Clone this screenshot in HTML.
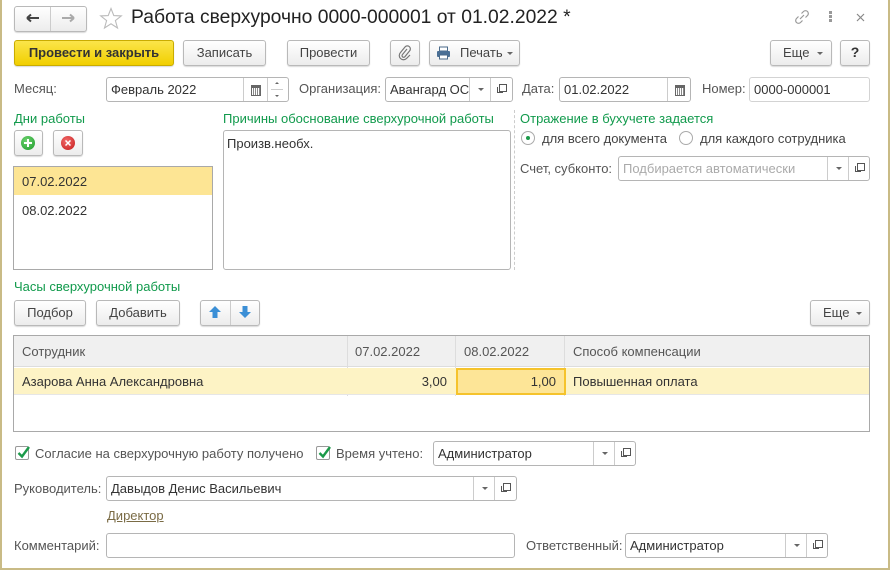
<!DOCTYPE html>
<html><head><meta charset="utf-8"><style>
*{box-sizing:border-box;margin:0;padding:0}
body{width:890px;height:570px;background:#fff;font-family:"Liberation Sans",Arial,sans-serif;font-size:13px;color:#333;position:relative;overflow:hidden}
.frame{position:absolute;left:0;top:0;width:890px;height:570px;border-left:2px solid #c9bb86;border-right:2px solid #c9bb86;border-bottom:2px solid #c9bb86}
.a{position:absolute}
.btn{position:absolute;height:25px;border:1px solid #b9b9b9;border-radius:3px;background:linear-gradient(#fff,#ececec);box-shadow:0 1px 1px rgba(0,0,0,.15);text-align:center;line-height:23px;color:#444}
.fld{position:absolute;height:25px;border:1px solid #b5b5b5;border-radius:3px;background:#fff;line-height:23px;padding-left:4px;color:#333;white-space:nowrap;overflow:hidden}
.lbl{position:absolute;color:#555;white-space:nowrap}
.grn{position:absolute;color:#119a4c;white-space:nowrap}
.sep{position:absolute;top:0;width:1px;height:23px;background:#ccc}
.dd{position:absolute;top:0;width:21px;height:23px;border-left:1px solid #ccc}
.dd:after{content:"";position:absolute;left:8px;top:10px;border-left:3px solid transparent;border-right:3px solid transparent;border-top:3px solid #666}
.op{position:absolute;top:0;width:21px;height:23px;border-left:1px solid #ccc}
.op:before{content:"";position:absolute;left:8px;top:6px;width:6px;height:6px;border:1px solid #555}
.op:after{content:"";position:absolute;left:6px;top:9px;width:5px;height:5px;border-left:1px solid #555;border-bottom:1px solid #555}
.cal{position:absolute;top:0;width:23px;height:23px;border-left:1px solid #ccc}
.cal:after{content:"";position:absolute;left:7px;top:7px;width:8px;height:7px;border:1px solid #666;border-top:3px solid #666;background:repeating-linear-gradient(90deg,#fff 0 1px,#888 1px 2px)}
.cb{position:absolute;width:14px;height:14px;border:1px solid #999;border-radius:2px;background:#fff}
.cb svg{position:absolute;left:0;top:-2px}
</style></head><body>
<div class="frame"></div>

<div class="btn" style="left:14px;top:6px;width:73px;height:26px"></div>
<div class="a" style="left:50px;top:7px;width:1px;height:24px;background:#ccc"></div>
<svg class="a" style="left:26px;top:13px" width="14" height="10"><path d="M1 5H13M1 5L5 1.5M1 5L5 8.5" stroke="#444" stroke-width="2" fill="none"/></svg>
<svg class="a" style="left:61px;top:13px" width="14" height="10"><path d="M13 5H1M13 5L9 1.5M13 5L9 8.5" stroke="#aaa" stroke-width="2" fill="none"/></svg>
<svg class="a" style="left:99px;top:7px" width="24" height="23"><path d="M12 1.5L14.8 8.6 22.3 8.9 16.4 13.6 18.5 21 12 16.8 5.5 21 7.6 13.6 1.7 8.9 9.2 8.6Z" fill="none" stroke="#bbb" stroke-width="1.1"/></svg>
<div class="a" style="left:131px;top:7px;font-size:19.3px;color:#222;white-space:nowrap">Работа сверхурочно 0000-000001 от 01.02.2022 *</div>
<svg class="a" style="left:794px;top:9px" width="16" height="16"><path d="M6 10L10 6M7.5 4.5L9.5 2.5a2.5 2.5 0 0 1 4 4L11.5 8.5M8.5 11.5L6.5 13.5a2.5 2.5 0 0 1 -4 -4L4.5 7.5" stroke="#999" stroke-width="1.2" fill="none"/></svg>
<div class="a" style="left:829px;top:11px;width:3px;height:3px;background:#999;box-shadow:0 4px #999,0 8px #999"></div>
<svg class="a" style="left:856px;top:13px" width="9" height="9"><path d="M1 1L8 8M8 1L1 8" stroke="#888" stroke-width="1.2"/></svg>

<div class="btn" style="left:14px;top:40px;width:160px;height:26px;background:linear-gradient(#fbe54a,#f1cf00);border-color:#c9ac00;color:#333;font-weight:bold">Провести и закрыть</div>
<div class="btn" style="left:183px;top:40px;width:83px;height:26px">Записать</div>
<div class="btn" style="left:287px;top:40px;width:83px;height:26px">Провести</div>
<div class="btn" style="left:390px;top:40px;width:30px;height:26px"></div>
<svg class="a" style="left:398px;top:45px" width="14" height="16"><path d="M9 4L4.5 9.5a1.6 1.6 0 0 0 2.3 2.3L11.5 6a3 3 0 0 0 -4.3 -4.2L2.5 7.5a4.2 4.2 0 0 0 6 6L12 10" stroke="#777" stroke-width="1.2" fill="none"/></svg>
<div class="btn" style="left:429px;top:40px;width:91px;height:26px;text-align:left;padding-left:30px">Печать</div>
<svg class="a" style="left:436px;top:46px" width="15" height="14"><rect x="3.5" y="1" width="8" height="4" fill="#fff" stroke="#4a6a8a"/><rect x="1" y="5" width="13" height="6" rx="1" fill="#4a6f95"/><rect x="3.5" y="9" width="8" height="4" fill="#fff" stroke="#4a6a8a"/></svg>
<div class="a" style="left:507px;top:52px;border-left:3px solid transparent;border-right:3px solid transparent;border-top:3px solid #666"></div>
<div class="btn" style="left:770px;top:40px;width:62px;height:26px;text-align:left;padding-left:12px">Еще</div>
<div class="a" style="left:817px;top:52px;border-left:3px solid transparent;border-right:3px solid transparent;border-top:3px solid #666"></div>
<div class="btn" style="left:840px;top:40px;width:30px;height:26px;font-weight:bold;color:#333;font-size:14px">?</div>

<div class="lbl" style="left:14px;top:81px">Месяц:</div>
<div class="fld" style="left:106px;top:77px;width:183px">Февраль 2022<div class="cal" style="left:136px"></div><div class="sep" style="left:160px"></div>
<div class="a" style="left:168px;top:4px;border-left:2px solid transparent;border-right:2px solid transparent;border-bottom:2px solid #666"></div>
<div class="a" style="left:164px;top:11px;width:12px;height:1px;background:#ccc"></div>
<div class="a" style="left:168px;top:17px;border-left:2px solid transparent;border-right:2px solid transparent;border-top:2px solid #666"></div></div>
<div class="lbl" style="left:299px;top:81px">Организация:</div>
<div class="fld" style="left:385px;top:77px;width:128px">Авангард ОС<div class="dd" style="left:83px"></div><div class="op" style="left:104px"></div></div>
<div class="lbl" style="left:522px;top:81px">Дата:</div>
<div class="fld" style="left:559px;top:77px;width:132px">01.02.2022<div class="cal" style="left:107px"></div></div>
<div class="lbl" style="left:702px;top:81px">Номер:</div>
<div class="fld" style="left:749px;top:77px;width:121px;border-color:#d3d3d3">0000-000001</div>

<div class="grn" style="left:14px;top:111px">Дни работы</div>
<div class="btn" style="left:14px;top:130px;width:29px;height:26px"></div>
<div class="a" style="left:21px;top:136px;width:14px;height:14px;border-radius:50%;background:radial-gradient(circle at 40% 35%,#6fd36f,#1b9a2a)"></div>
<div class="a" style="left:24px;top:142px;width:8px;height:2px;background:#fff"></div><div class="a" style="left:27px;top:139px;width:2px;height:8px;background:#fff"></div>
<div class="btn" style="left:53px;top:130px;width:30px;height:26px"></div>
<div class="a" style="left:61px;top:136px;width:14px;height:14px;border-radius:50%;background:radial-gradient(circle at 40% 35%,#f26a6a,#c41a1a)"></div>
<svg class="a" style="left:65px;top:140px" width="6" height="6"><path d="M0.5 0.5L5.5 5.5M5.5 0.5L0.5 5.5" stroke="#fff" stroke-width="1.5"/></svg>
<div class="a" style="left:13px;top:166px;width:200px;height:104px;border:1px solid #a9a9a9"></div>
<div class="a" style="left:14px;top:167px;width:198px;height:28px;background:#fde594"></div>
<div class="a" style="left:22px;top:174px;color:#333">07.02.2022</div>
<div class="a" style="left:22px;top:203px;color:#333">08.02.2022</div>

<div class="grn" style="left:223px;top:111px">Причины обоснование сверхурочной работы</div>
<div class="a" style="left:223px;top:130px;width:288px;height:140px;border:1px solid #b5b5b5;border-radius:3px;padding:5px 3px;color:#333">Произв.необх.</div>
<div class="a" style="left:514px;top:110px;height:160px;border-left:1px dashed #ccc"></div>

<div class="grn" style="left:520px;top:111px">Отражение в бухучете задается</div>
<div class="a" style="left:521px;top:131px;width:14px;height:14px;border:1px solid #aaa;border-radius:50%"></div>
<div class="a" style="left:526px;top:136px;width:4px;height:4px;border-radius:50%;background:#1c9a4a"></div>
<div class="lbl" style="left:542px;top:131px;color:#444">для всего документа</div>
<div class="a" style="left:679px;top:131px;width:14px;height:14px;border:1px solid #aaa;border-radius:50%"></div>
<div class="lbl" style="left:700px;top:131px;color:#444">для каждого сотрудника</div>
<div class="lbl" style="left:520px;top:161px">Счет, субконто:</div>
<div class="fld" style="left:618px;top:156px;width:252px;color:#aaa">Подбирается автоматически<div class="dd" style="left:208px"></div><div class="op" style="left:229px"></div></div>

<div class="grn" style="left:14px;top:279px">Часы сверхурочной работы</div>
<div class="btn" style="left:14px;top:300px;width:72px;height:26px">Подбор</div>
<div class="btn" style="left:96px;top:300px;width:84px;height:26px">Добавить</div>
<div class="btn" style="left:200px;top:300px;width:60px;height:26px"></div>
<div class="a" style="left:230px;top:301px;width:1px;height:24px;background:#ccc"></div>
<svg class="a" style="left:208px;top:305px" width="14" height="14"><path d="M7 1L13 7H9.5V13H4.5V7H1Z" fill="#3b8fd6"/></svg>
<svg class="a" style="left:238px;top:305px" width="14" height="14"><path d="M7 13L13 7H9.5V1H4.5V7H1Z" fill="#3b8fd6"/></svg>
<div class="btn" style="left:810px;top:300px;width:60px;height:26px;text-align:left;padding-left:12px">Еще</div>
<div class="a" style="left:856px;top:312px;border-left:3px solid transparent;border-right:3px solid transparent;border-top:3px solid #666"></div>

<div class="a" style="left:13px;top:335px;width:857px;height:97px;border:1px solid #a9a9a9"></div>
<div class="a" style="left:14px;top:336px;width:855px;height:31px;background:#f0f0f0;border-bottom:1px solid #ddd"></div>
<div class="a" style="left:347px;top:336px;width:1px;height:60px;background:#ddd"></div>
<div class="a" style="left:455px;top:336px;width:1px;height:60px;background:#ddd"></div>
<div class="a" style="left:564px;top:336px;width:1px;height:60px;background:#ddd"></div>
<div class="lbl" style="left:22px;top:344px">Сотрудник</div>
<div class="lbl" style="left:355px;top:344px">07.02.2022</div>
<div class="lbl" style="left:464px;top:344px">08.02.2022</div>
<div class="lbl" style="left:573px;top:344px">Способ компенсации</div>
<div class="a" style="left:14px;top:368px;width:855px;height:27px;background:#fdf3c5;border-bottom:1px solid #e6e6e6"></div>
<div class="a" style="left:456px;top:368px;width:110px;height:27px;background:#fde597;border:2px solid #f5c32c"></div>
<div class="a" style="left:22px;top:374px;color:#333">Азарова Анна Александровна</div>
<div class="a" style="left:348px;top:374px;width:99px;text-align:right;color:#333">3,00</div>
<div class="a" style="left:456px;top:374px;width:100px;text-align:right;color:#333">1,00</div>
<div class="a" style="left:573px;top:374px;color:#333">Повышенная оплата</div>

<div class="cb" style="left:15px;top:446px"><svg width="16" height="16"><path d="M2.5 8L6 11.5L13 2" stroke="#1c9a4a" stroke-width="2.4" fill="none"/></svg></div>
<div class="lbl" style="left:35px;top:446px">Согласие на сверхурочную работу получено</div>
<div class="cb" style="left:316px;top:446px"><svg width="16" height="16"><path d="M2.5 8L6 11.5L13 2" stroke="#1c9a4a" stroke-width="2.4" fill="none"/></svg></div>
<div class="lbl" style="left:336px;top:446px">Время учтено:</div>
<div class="fld" style="left:433px;top:441px;width:203px">Администратор<div class="dd" style="left:159px"></div><div class="op" style="left:180px"></div></div>

<div class="lbl" style="left:14px;top:481px">Руководитель:</div>
<div class="fld" style="left:106px;top:476px;width:411px">Давыдов Денис Васильевич<div class="dd" style="left:366px"></div><div class="op" style="left:387px"></div></div>
<div class="a" style="left:107px;top:508px;color:#7a6b45;text-decoration:underline">Директор</div>

<div class="lbl" style="left:14px;top:538px">Комментарий:</div>
<div class="fld" style="left:106px;top:533px;width:409px"></div>
<div class="lbl" style="left:526px;top:538px">Ответственный:</div>
<div class="fld" style="left:625px;top:533px;width:203px">Администратор<div class="dd" style="left:159px"></div><div class="op" style="left:180px"></div></div>
</body></html>
